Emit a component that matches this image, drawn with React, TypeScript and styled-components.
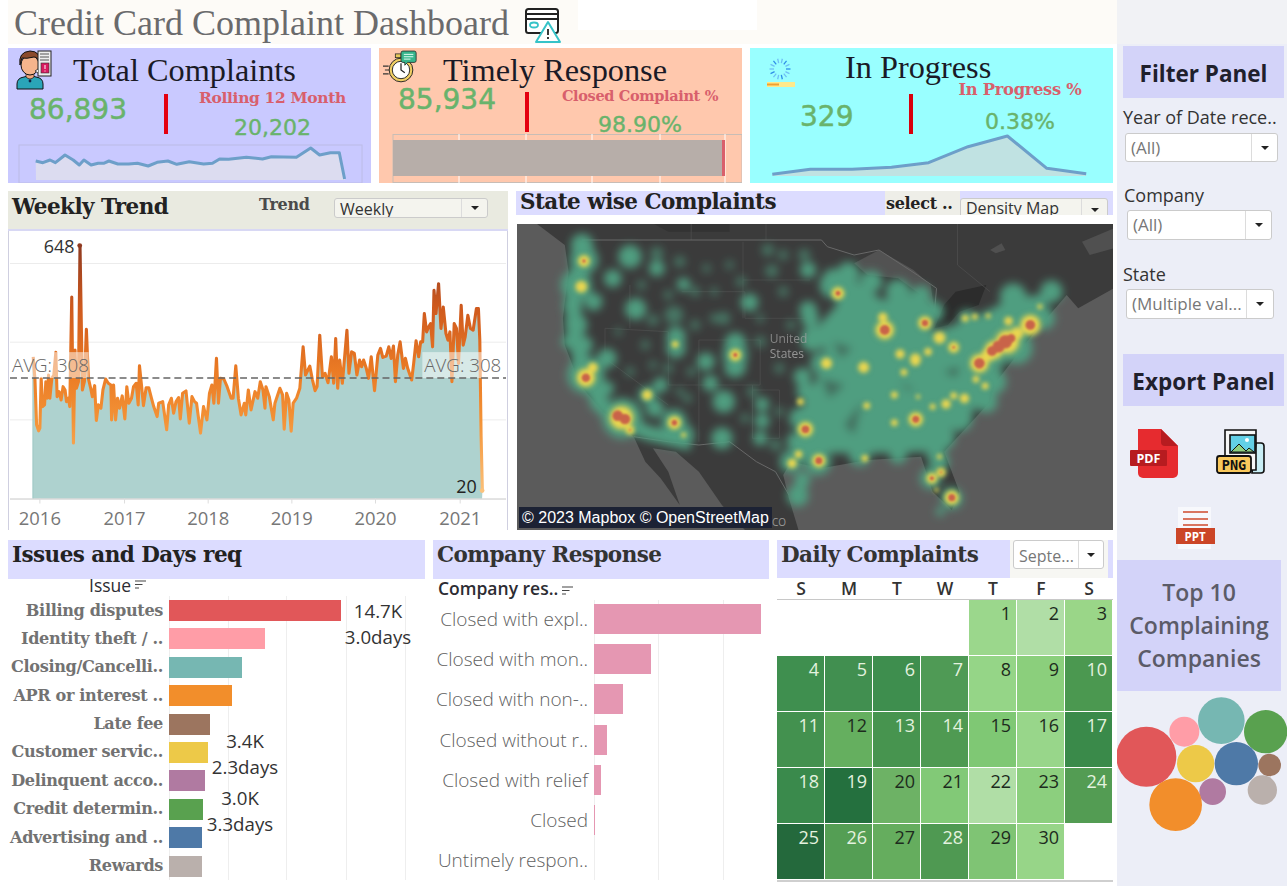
import React from "react";
import styled, { createGlobalStyle } from "styled-components";

const Global = createGlobalStyle`
  html, body { margin: 0; padding: 0; background: #fff; overflow: hidden; }
  * { box-sizing: border-box; }
`;
const SANS = `"Open Sans", "Noto Sans", sans-serif`;
const TIMES = `"Liberation Serif", serif`;
const SERIF = `"DejaVu Serif", "Liberation Serif", serif`;
const KPI = `"DejaVu Sans", sans-serif`;

const Page = styled.div`display:flex;width:1287px;height:886px;overflow:hidden;background:#fff;`;
const Main = styled.main`width:1117px;padding:0 4px 0 8px;display:flex;flex-direction:column;`;
const TopBar = styled.header`height:44px;background:#fdfbf7;display:flex;align-items:flex-start;padding-left:6px;margin-right:-4px;margin-bottom:4px;`;
const PageTitle = styled.h1`margin:4px 0 0;font:400 36px/38px ${TIMES};color:#6a6a6c;white-space:nowrap;width:511px;`;
const TitleIcon = styled.svg`width:38px;height:38px;margin-top:6px;flex:none;`;
const BlankTab = styled.div`width:179px;height:30px;background:#fff;margin-left:15px;`;

const KpiRow = styled.section`display:grid;grid-template-columns:repeat(3,363px);gap:8px;height:135px;`;
const Card = styled.article<{ $bg: string }>`background:${p => p.$bg};height:135px;display:flex;flex-direction:column;overflow:hidden;`;
const CardHead = styled.div<{ $h: number; $pad: number }>`height:${p => p.$h}px;padding-left:${p => p.$pad}px;display:flex;align-items:flex-start;flex:none;`;
const CardIcon = styled.svg<{ $w: number }>`width:${p => p.$w}px;height:42px;flex:none;margin-top:1px;`;
const CardTitle = styled.h2<{ $t: number; $l: number }>`margin:${p => p.$t}px 0 0 ${p => p.$l}px;font:400 32.3px/36px ${TIMES};color:#1a1a26;white-space:nowrap;`;
const CardBody = styled.div<{ $h: number; $col: number }>`height:${p => p.$h}px;flex:none;display:grid;grid-template-columns:${p => p.$col}px 4px 1fr;position:relative;z-index:1;`;
const BigValue = styled.div<{ $x: number; $t: number }>`margin:${p => p.$t}px 0 0 ${p => p.$x}px;font:400 28px/28px ${KPI};color:#69b36c;-webkit-text-stroke:0.5px #69b36c;`;
const Divider = styled.div<{ $t: number; $c?: string }>`margin-top:${p => p.$t}px;width:4px;height:40px;background:${p => p.$c || "#e4000f"};`;
const KpiRight = styled.div<{ $pad: number }>`padding-left:${p => p.$pad}px;text-align:center;`;
const KpiLabel = styled.div<{ $t: number; $fs: number }>`margin-top:${p => p.$t}px;font:700 ${p => p.$fs}px/18px ${SERIF};color:#d85f6c;white-space:nowrap;letter-spacing:-0.35px;`;
const KpiSub = styled.div<{ $t: number }>`margin-top:${p => p.$t}px;font:400 22px/24px ${KPI};color:#69b36c;-webkit-text-stroke:0.4px #69b36c;`;
const Spark = styled.svg`width:363px;height:49px;display:block;flex:none;`;

const MidRow = styled.section`display:grid;grid-template-columns:500px 597px;gap:8px;height:339px;margin-top:8px;`;
const TrendCol = styled.div`display:flex;flex-direction:column;`;
const TrendHead = styled.div`height:40px;background:#e9eae0;border-bottom:2px solid #d8d8f4;display:flex;align-items:flex-start;padding:2px 0 0 4px;`;
const PanelTitle = styled.h3<{ $w?: number; $c?: string; $lh?: number }>`margin:0;font:700 21.5px/${p => p.$lh || 28}px ${SERIF};letter-spacing:-0.55px;color:${p => p.$c || "#222"};white-space:nowrap;${p => p.$w ? `width:${p.$w}px;flex:none;` : ""}`;
const MiniLabel = styled.span<{ $w: number; $c?: string }>`display:block;flex:none;width:${p => p.$w}px;font:700 16px/24px ${SERIF};letter-spacing:-0.3px;color:${p => p.$c || "#4a4a4a"};white-space:nowrap;`;
const TrendSvg = styled.svg`width:500px;height:299px;display:block;border-left:1px solid #cfcfe0;border-right:1px solid #cfcfe0;`;
const Drop = styled.div<{ $w: number; $h: number; $bg?: string; $mt?: number }>`width:${p => p.$w}px;height:${p => p.$h}px;margin-top:${p => p.$mt || 0}px;background:${p => p.$bg || "#fff"};border:1px solid #cbcbcb;border-radius:3px;display:flex;align-items:stretch;overflow:hidden;flex:none;`;
const DropText = styled.span<{ $fs?: number; $c?: string; $off?: number }>`flex:1;margin-top:${p => p.$off ?? 2}px;padding-left:5px;font:400 ${p => p.$fs || 17}px/24px ${SANS};color:${p => p.$c || "#777"};white-space:nowrap;overflow:hidden;`;
const DropArrow = styled.span<{ $w: number }>`width:${p => p.$w}px;flex:none;border-left:1px solid #dcdcdc;display:flex;align-items:center;justify-content:center;&::after{content:"";border-left:4px solid transparent;border-right:4px solid transparent;border-top:4px solid #222;}`;
const MapCol = styled.div`display:flex;flex-direction:column;`;
const MapHead = styled.div`height:24px;background:#dcdcff;display:flex;padding-left:4px;overflow:hidden;margin-bottom:9px;`;
const SelectTag = styled.div`width:75px;height:24px;background:#eeeee8;padding:1px 0 0 1px;flex:none;`;
const MapFrame = styled.div`position:relative;width:596px;height:306px;margin-left:1px;overflow:hidden;background:#5b5b5b;`;
const MapSvg = styled.svg`display:block;width:596px;height:306px;`;
const Attribution = styled.div`position:absolute;left:2px;bottom:2px;height:21px;width:253px;background:#1c2234;color:#fff;font:400 16px/21px "Liberation Sans",sans-serif;padding-left:3px;white-space:nowrap;`;
const CoMark = styled.span`position:absolute;left:255px;bottom:1px;font:400 10px/14px ${SANS};color:#999;`;

const BottomRow = styled.section`display:grid;grid-template-columns:417px 336px 336px;gap:8px;height:346px;margin-top:10px;`;
const Col = styled.div`display:flex;flex-direction:column;min-width:0;`;
const ColHead = styled.div`height:39px;background:#dcdcff;padding:1px 0 0 4px;flex:none;`;
const SubHead = styled.div<{ $h: number; $pad: number }>`height:${p => p.$h}px;overflow:hidden;padding-left:${p => p.$pad}px;display:flex;align-items:flex-start;gap:4px;flex:none;`;
const SubText = styled.span<{ $off: number; $fw: number }>`margin-top:${p => p.$off}px;font:${p => p.$fw} 17.5px/22px ${SANS};color:#2c2c32;white-space:nowrap;`;
const SortIcon = styled.svg<{ $off: number }>`width:11px;height:9px;flex:none;margin-top:${p => p.$off}px;`;
const BarArea = styled.div`position:relative;flex:none;`;
const GridLine = styled.i<{ $x: number; $t: number; $h: number }>`position:absolute;left:${p => p.$x}px;top:${p => p.$t}px;height:${p => p.$h}px;width:1px;background:#eeeeee;`;
const IssueRows = styled.div`position:relative;display:grid;grid-auto-rows:21px;row-gap:7.4px;grid-template-columns:155px 1fr;column-gap:6px;align-items:center;`;
const IssueLabel = styled.div`font:700 16.1px/21px ${SERIF};letter-spacing:-0.35px;color:#727272;text-align:right;white-space:nowrap;justify-self:end;margin-top:-1px;`;
const Bar = styled.div<{ $w: number; $c: string; $h: number }>`width:${p => p.$w}px;height:${p => p.$h}px;background:${p => p.$c};`;
const Callout = styled.div<{ $x: number; $y: number }>`position:absolute;left:${p => p.$x}px;top:${p => p.$y}px;transform:translateX(-50%);text-align:center;font:400 18.7px/26px ${SANS};color:#333;white-space:nowrap;`;
const RespRows = styled.div`position:relative;display:grid;grid-auto-rows:30px;row-gap:10.2px;grid-template-columns:155px 1fr;column-gap:6px;align-items:center;`;
const RespLabel = styled.div`font:300 19px/26px ${SANS};color:#5f5f5f;text-align:right;white-space:nowrap;justify-self:end;`;
const CalHead = styled.div`height:38px;display:flex;flex:none;background:#dcdcff;padding-left:4px;`;
const CalTitle = styled.div`width:229px;padding-top:1px;flex:none;`;
const CalSelectBox = styled.div`width:98px;height:38px;background:#f7f7f3;padding-left:3px;flex:none;`;
const WeekRow = styled.div`display:grid;grid-template-columns:repeat(7,48px);height:22px;border-bottom:1px solid #c8c8c8;flex:none;`;
const WeekDay = styled.span`text-align:center;font:600 17.5px/21px ${SANS};color:#333;`;
const CalGrid = styled.div`display:grid;grid-template-columns:repeat(7,47px);grid-auto-rows:55px;gap:1px;border-bottom:2px solid #cfcfcf;height:282px;flex:none;`;
const Day = styled.div<{ $bg: string; $light: boolean }>`background:${p => p.$bg};color:${p => p.$light ? "#e3f2df" : "#1d2b1d"};font:400 18px/24px ${SANS};text-align:right;padding:1px 5px 0 0;`;

const Side = styled.aside`width:170px;background:#eceef7;display:flex;flex-direction:column;position:relative;`;
const SideTop = styled.div`height:44px;background:#f1f2f5;margin-bottom:2px;flex:none;`;
const PanelBox = styled.div<{ $mt?: number }>`width:161px;height:52px;margin:${p => p.$mt || 0}px 0 0 6px;padding-top:3px;background:#d3d3f9;display:flex;align-items:center;justify-content:center;font:700 22.5px/28px ${SANS};color:#20202c;flex:none;white-space:nowrap;`;
const FilterGroup = styled.div<{ $x: number; $t: number }>`padding-left:${p => p.$x}px;margin-top:${p => p.$t}px;flex:none;`;
const FilterLabel = styled.div<{ $dx: number; $gap: number }>`font:400 18px/24px ${SANS};color:#333;margin:0 0 ${p => p.$gap}px ${p => p.$dx}px;white-space:nowrap;`;
const ExportRow = styled.div`display:flex;margin:23px 0 0 13px;flex:none;height:50px;`;
const PptWrap = styled.div`margin:28px 0 0 58px;height:42px;flex:none;`;
const TopBox = styled.div`width:164px;height:131px;margin-top:11px;background:#d3d3f9;display:flex;flex-direction:column;align-items:center;justify-content:center;font:600 23px/33px ${SANS};color:#5b5b68;text-align:center;flex:none;`;
const BubbleSvg = styled.svg`width:170px;height:150px;display:block;flex:none;`;

type P = [number, number];
const toPath = (pts: P[]) => pts.map((p, i) => `${i ? "L" : "M"}${p[0].toFixed(1)} ${p[1].toFixed(1)}`).join(" ");

const A: P[] = [[22,365],[27,430],[32,570],[38,588],[42,580],[46,430],[50,515],[56,510],[60,440],[64,490],[68,420],[72,490],[78,430],[84,420],[90,352],[94,485],[100,470],[106,495],[112,455],[118,465],[122,500],[128,490],[132,515],[138,185],[143,625],[148,345],[152,460],[158,440],[163,30],[170,465],[176,440],[182,282],[188,430],[195,460],[200,485],[207,452],[212,557],[218,510],[226,520],[232,465],[240,432],[248,445],[256,450],[258,555],[264,450],[270,555],[276,490],[282,520],[290,483],[298,552],[304,455],[310,505],[318,490],[324,455],[332,445],[338,510],[342,392],[348,450],[354,512],[362,458],[370,458],[378,490],[385,515],[395,545],[400,505],[412,500],[424,585],[430,510],[438,490],[445,535],[452,500],[460,488],[465,552],[472,475],[482,468],[492,565],[500,485],[508,500],[514,505],[526,595],[535,515],[545,555],[553,475],[560,450],[566,505],[574,370],[580,505],[586,430],[596,432],[606,455],[618,490],[624,490],[632,392],[640,490],[648,540],[658,505],[662,540],[670,465],[678,525],[690,470],[698,490],[706,440],[714,465],[720,520]];
const B: P[] = [[18,350],[28,380],[40,450],[45,400],[60,355],[68,375],[73,478],[80,370],[87,390],[94,484],[100,400],[110,385],[120,355],[130,230],[137,315],[150,288],[158,330],[166,362],[172,350],[180,195],[188,320],[196,310],[205,338],[215,260],[222,340],[228,205],[234,355],[240,270],[248,340],[262,180],[268,310],[276,245],[284,250],[292,315],[300,270],[306,290],[312,270],[320,295],[327,325],[335,260],[345,362],[355,255],[363,235],[370,262],[380,258],[388,230],[395,265],[402,228],[408,335],[415,255],[422,215],[432,295],[438,265],[445,295],[457,330],[463,280],[470,212],[478,260],[484,215],[490,215],[495,130],[502,185],[508,170],[514,160],[520,230],[524,60],[530,130],[538,40],[545,175],[552,110],[560,190],[566,210],[572,185],[578,335],[585,160],[592,175],[598,280],[606,105],[612,225],[618,200],[626,135],[634,175],[642,180],[652,115],[658,115],[662,210],[666,500],[670,665]];
const trend: P[] = [...A.map(([x, y]): P => [25 + x / 3, 235 + y / 3]), ...B.map(([x, y]): P => [260 + x / 3, 270 + y / 3])];

const TrendChart = () => {
  const line = toPath(trend);
  const area = `${line} L483 499 L32 499 Z`;
  const years: [string, number][] = [["2016", 39], ["2017", 124], ["2018", 208], ["2019", 292], ["2020", 376], ["2021", 461]];
  return (
    <TrendSvg viewBox="8 231 500 299">
      <defs>
        <linearGradient id="tg" gradientUnits="userSpaceOnUse" x1="0" y1="245" x2="0" y2="495">
          <stop offset="0" stopColor="#8f3a20" />
          <stop offset="0.25" stopColor="#cf5a1e" />
          <stop offset="0.5" stopColor="#ea7a24" />
          <stop offset="0.7" stopColor="#f39236" />
          <stop offset="1" stopColor="#fbc27c" />
        </linearGradient>
      </defs>
      {[263, 342, 420].map(y => <line key={y} x1="9" x2="507" y1={y} y2={y} stroke="#ececec" />)}
      <path d={area} fill="#aed2cf" />
      <line x1="32" x2="32" y1="360" y2="499" stroke="#9cc7c4" />
      <path d={line} fill="none" stroke="url(#tg)" strokeWidth="3.1" strokeLinejoin="round" />
      <line x1="9" x2="507" y1="499.5" y2="499.5" stroke="#c8c8c8" />
      <rect x="12" y="352" width="76" height="26" fill="#fff" fillOpacity=".5" />
      <rect x="423" y="352" width="81" height="26" fill="#fff" fillOpacity=".5" />
      <text x="11" y="372" fontFamily={SANS} fontSize="18.8" fontWeight="300" fill="#666">AVG: 308</text>
      <text x="425" y="372" fontFamily={SANS} fontSize="18.8" fontWeight="300" fill="#666">AVG: 308</text>
      <line x1="9" x2="507" y1="378" y2="378" stroke="#666" strokeWidth="1.6" strokeDasharray="7 4" />
      <circle cx="79" cy="245" r="2.4" fill="#8f3a20" />
      <circle cx="483" cy="491" r="2.4" fill="#fbc27c" />
      <text x="43" y="252" fontFamily={SANS} fontSize="18" fill="#333">648</text>
      <text x="457" y="493" fontFamily={SANS} fontSize="18" fill="#222">20</text>
      {years.map(([t, x]) => (
        <g key={t}>
          <line x1={x} x2={x} y1="499" y2="504" stroke="#ddd" />
          <text x={x} y="526" textAnchor="middle" fontFamily={SANS} fontSize="18.5" fill="#777">{t}</text>
        </g>
      ))}
    </TrendSvg>
  );
};

const mx = (x: number) => 515 + x / 2.61;
const my = (y: number) => 185 + y / 3;
const mapPts = (pts: number[][]) => pts.map(([x, y]) => `${mx(x).toFixed(1)},${my(y).toFixed(1)}`).join(" ");

const GREEN: number[][] = [[175,180,25],[180,225,32],[160,300,35],[150,360,22],[205,350,20],[160,420,25],[140,470,16],[180,480,20],[240,520,22],[185,570,42],[220,650,22],[240,610,16],[280,700,45],[345,630,20],[365,670,20],[380,600,17],[415,710,28],[440,750,24],[300,215,26],[255,280,20],[370,250,18],[315,372,24],[440,298,15],[420,455,22],[420,490,22],[498,530,20],[575,475,24],[575,510,28],[575,545,24],[510,595,18],[545,650,25],[540,760,24],[645,658,16],[645,708,17],[640,760,16],[738,932,24],[750,885,18],[750,575,20],[612,352,20],[765,255,18],[868,258,20],[925,285,20],[765,375,20],[780,460,28],[830,280,22],
[830,300,30],[870,265,25],[930,290,25],[1000,320,28],[1060,330,22],[1090,380,25],[1180,400,20],[1300,335,30],[1400,320,25],[1380,400,25],[1310,490,35],[1250,590,28],[1230,650,25],[1160,700,30],[1120,760,25],[1100,810,22],[1000,810,20],[900,810,25],[790,830,30],[720,830,25],[735,770,22],[745,700,25],[760,620,22],[800,535,25],[775,465,25],[770,400,20],[1108,830,22],[1085,880,24],[1140,940,24],[1110,980,10]];
const DIM: number[][] = [[370,205,14],[430,230,12],[415,390,20],[360,405,12],[545,400,14],[470,320,11],[590,290,11],[700,210,11],[470,420,11],[640,470,12],[400,550,11],[660,195,13],[670,258,14],[755,210,13],[680,780,13],[520,400,10],[400,330,10],[340,480,10],[620,620,12],[600,700,10],[690,550,11],[460,560,10],[300,560,10],[560,240,9],[700,320,11],[720,420,10],[450,640,10],[330,300,10],[500,250,9],[520,320,9],[640,400,9],[430,620,9],[560,560,10],[690,680,10],[270,440,8],[360,540,9]];
const YEL: number[][] = [[180,228,14],[173,305,14],[185,578,22],[203,548,12],[278,698,28],[300,735,11],[345,630,12],[416,713,16],[418,478,8],[575,510,14],[843,325,15],[813,535,13],[910,547,13],[965,435,22],[960,397,11],[1070,414,16],[1108,458,14],[1145,487,13],[1005,507,11],[1045,522,13],[1045,530,10],[1078,500,9],[1015,562,8],[1212,535,22],[1235,510,16],[1250,495,22],[1285,470,28],[1310,445,15],[1345,420,24],[1288,408,10],[1175,400,8],[1200,395,7],[1235,393,6],[1203,583,8],[1227,603,8],[990,630,8],[1125,657,11],[1173,640,11],[1145,632,8],[1090,665,7],[1052,635,5],[1046,703,17],[990,713,8],[918,662,8],[745,650,8],[758,733,18],[793,827,16],[740,808,9],[723,835,11],[913,820,8],[1088,880,13],[1112,862,11],[1100,915,5],[1140,938,17],[1108,815,6],[440,750,6],[1370,365,6]];
const RED: number[][] = [[180,228,5],[185,578,12],[268,692,15],[287,702,15],[300,735,3],[416,713,8],[575,510,6],[843,325,7],[965,435,14],[1070,414,9],[1145,487,4],[1212,535,15],[1245,498,14],[1262,485,17],[1280,470,19],[1295,460,12],[1345,420,14],[1046,703,10],[758,733,11],[793,827,10],[1088,880,6],[1112,862,3],[1140,938,10]];

const USMap = () => {
  const r = (v: number) => v / 2.8;
  return (
    <MapSvg viewBox="517 224 596 306">
      <defs>
        <filter id="b1" x="-20%" y="-20%" width="140%" height="140%"><feGaussianBlur stdDeviation="4.2" /></filter>
        <filter id="b2" x="-20%" y="-20%" width="140%" height="140%"><feGaussianBlur stdDeviation="1.9" /></filter>
        <filter id="b3" x="-20%" y="-20%" width="140%" height="140%"><feGaussianBlur stdDeviation="1" /></filter>
      </defs>
      <rect x="517" y="224" width="596" height="306" fill="#5b5b5b" />
      <polygon fill="#3b3b3b" points={mapPts([[55,115],[130,180],[140,260],[125,400],[130,480],[170,600],[230,680],[310,755],[340,830],[380,880],[430,960],[400,860],[360,790],[420,800],[480,860],[540,960],[600,1035],[740,1035],[715,940],[700,870],[720,830],[800,850],[920,825],[1060,815],[1090,920],[1140,975],[1160,920],[1120,800],[1240,650],[1250,600],[1350,450],[1440,330],[1470,370],[1563,310],[1563,115]])} />
      <polygon fill="#525252" points={mapPts([[885,235],[950,195],[1040,255],[1085,300],[1095,380],[1060,330],[1000,280],[920,270]])} />
      <polygon fill="#2c2c2c" points={mapPts([[1095,430],[1120,360],[1150,320],[1230,300],[1210,360],[1160,380],[1130,420]])} />
      <polygon fill="#505050" points={mapPts([[1480,170],[1563,130],[1563,190],[1500,210]])} />
      <polygon fill="#505050" points={mapPts([[1240,195],[1270,175],[1280,195],[1255,205]])} />
      <polygon fill="#333" points={mapPts([[360,115],[560,115],[560,140],[400,140]])} />
      <g fill="none" stroke="#4c4c4c" strokeWidth=".8">
        <polyline points={mapPts([[235,430],[400,440],[400,600]])} />
        <polyline points={mapPts([[235,430],[235,520],[400,660]])} />
        <polyline points={mapPts([[300,300],[300,430]])} />
        <polyline points={mapPts([[435,320],[600,320],[600,400],[760,400]])} />
        <polyline points={mapPts([[595,170],[595,400]])} />
        <polyline points={mapPts([[595,285],[770,285]])} />
        <polyline points={mapPts([[480,465],[640,465],[640,600],[400,600]])} />
        <polyline points={mapPts([[480,465],[480,770]])} />
        <polyline points={mapPts([[620,600],[620,760],[690,760],[690,615],[620,615]])} />
        <polyline points={mapPts([[1155,115],[1155,240],[1240,320]])} />
        <polyline points={mapPts([[460,115],[460,165]])} />
        <polyline points={mapPts([[655,115],[655,165]])} />
      </g>
      <g fill="none" stroke="#686868" strokeWidth="1">
        <polyline points={mapPts([[175,165],[800,165],[815,185],[885,210],[950,195],[1050,270],[1100,310],[1095,380]])} />
        <polyline points={mapPts([[310,755],[400,770],[480,780],[560,770],[630,830],[680,860],[715,930]])} />
      </g>
      <g filter="url(#b1)">
        <polygon fill="#4f9e80" points={mapPts([[830,300],[880,280],[960,345],[1030,330],[1080,360],[1090,440],[1170,410],[1300,340],[1400,325],[1380,390],[1340,460],[1250,570],[1225,650],[1110,760],[1095,800],[950,805],[790,805],[720,835],[735,780],[750,660],[780,600],[810,500],[785,430],[840,360]])} />
        <polyline fill="none" stroke="#4f9e80" strokeWidth="15" strokeLinejoin="round" points={mapPts([[175,180],[160,300],[150,420],[170,520],[185,580],[230,670],[290,715],[350,745],[460,775]])} />
        {GREEN.map(([x, y, s], i) => <circle key={i} cx={mx(x)} cy={my(y)} r={r(s) * 1.25} fill="#4f9e80" />)}
        {DIM.map(([x, y, s], i) => <circle key={i} cx={mx(x)} cy={my(y)} r={r(s) * 1.3} fill="#4f9e80" opacity=".6" />)}
        <polygon fill="#3a4a44" opacity=".8" points={mapPts([[1120,560],[1160,545],[1150,575]])} />
        <polygon fill="#3a4a44" opacity=".6" points={mapPts([[860,720],[905,650],[885,750]])} />
        <polygon fill="#3a4a44" opacity=".6" points={mapPts([[800,580],[860,600],[820,640]])} />
        <polygon fill="#3a4a44" opacity=".6" points={mapPts([[830,470],[880,490],[850,520]])} />
        <polygon fill="#3a4a44" opacity=".5" points={mapPts([[1000,590],[1040,610],[1030,620]])} />
      </g>
      <g filter="url(#b2)">
        {YEL.map(([x, y, s], i) => <circle key={i} cx={mx(x)} cy={my(y)} r={r(s) * 1.5} fill="#9fbf62" opacity=".4" />)}
        {YEL.map(([x, y, s], i) => <circle key={i} cx={mx(x)} cy={my(y)} r={r(s) * 1.1} fill="#e9d650" />)}
      </g>
      <g filter="url(#b3)">
        {RED.map(([x, y, s], i) => <circle key={i} cx={mx(x)} cy={my(y)} r={r(s)} fill="#c9644a" />)}
      </g>
      <text x={mx(665)} y={my(475)} fontFamily={SANS} fontSize="12" fill="#a5a5a5" opacity=".7">United</text>
      <text x={mx(665)} y={my(520)} fontFamily={SANS} fontSize="12" fill="#a5a5a5" opacity=".85">States</text>
    </MapSvg>
  );
};

const spark1: P[] = ([[100,483],[120,488],[140,480],[155,488],[182,465],[205,480],[222,495],[235,480],[255,495],[275,490],[290,490],[305,483],[330,492],[360,492],[385,490],[415,498],[440,487],[470,483],[495,493],[530,485],[570,492],[595,490],[615,477],[640,478],[690,472],[735,477],[760,470],[830,472],[870,444],[895,465],[925,458],[950,458],[965,537]] as P[]).map(([x, y]): P => [x / 2.8 - 8, y / 3 - 134]);
const spark3: P[] = ([[458,523],[540,508],[630,508],[715,502],[795,488],[880,440],[965,408],[1050,505],[1135,521]] as P[]).map(([x, y]): P => [560 + x / 2.157 - 750, y / 3 - 134]);

const PersonIcon = () => (
  <CardIcon $w={44} viewBox="0 0 44 42">
    <path d="M4 40 v-5 q0-6 7-7 l4-1 h4 l4 1 q7 1 7 7 v5z" fill="#2aa5b8" stroke="#111" strokeWidth="1" />
    <circle cx="17" cy="32" r="1.4" fill="#124" />
    <path d="M13 24 h8 v4 q-4 4-8 0z" fill="#f0a77e" stroke="#111" strokeWidth=".7" />
    <ellipse cx="17" cy="16" rx="9" ry="10" fill="#f5b48c" stroke="#111" strokeWidth="1" />
    <path d="M7 16 q-2-13 10-14 q11 0 10 13 q-2-7-6-7 q-8 2-12 1 q-1 3-2 7z" fill="#8a4a2c" stroke="#111" strokeWidth="1" />
    <rect x="25" y="2" width="13" height="25" fill="#eee" stroke="#222" strokeWidth="1" />
    <path d="M27 5 h9 M27 8 h9 M27 11 h9" stroke="#555" strokeWidth="1" />
    <rect x="28" y="14" width="8" height="10" fill="#d81b60" stroke="#333" strokeWidth=".6" />
    <path d="M32 16 v4 M32 21.5 v1" stroke="#fff" strokeWidth="1" />
    <path d="M25 20 l-3 2 l3 2" fill="#eee" stroke="#222" strokeWidth=".8" />
  </CardIcon>
);
const WatchIcon = () => (
  <CardIcon $w={36} viewBox="0 0 38 42">
    <path d="M0 17h6 M2 21h6 M0 25h6" stroke="#333" strokeWidth="1.3" />
    <rect x="13" y="4" width="6" height="4" fill="#e8c95a" stroke="#222" strokeWidth=".8" />
    <circle cx="19" cy="21" r="12.5" fill="#f1cf63" stroke="#222" strokeWidth="1" />
    <circle cx="19" cy="21" r="9.2" fill="#fff" stroke="#222" strokeWidth="1" />
    <path d="M19 14v7l4 3" fill="none" stroke="#222" strokeWidth="1.3" />
    <path d="M21 1h12a2 2 0 012 2v8a2 2 0 01-2 2h-7l-3 3v-3h-2a2 2 0 01-2-2V3a2 2 0 012-2z" fill="#37b58c" stroke="#222" strokeWidth=".8" />
    <path d="M22 4.500h10M22 7h10M22 9.500h7" stroke="#e7fff5" strokeWidth="1" />
  </CardIcon>
);
const SpinnerIcon = () => (
  <CardIcon $w={36} viewBox="0 0 36 42">
    {Array.from({ length: 14 }).map((_, i) => {
      const a = (i / 14) * Math.PI * 2;
      return <line key={i} x1={18 + Math.cos(a) * 6} y1={20 + Math.sin(a) * 6} x2={18 + Math.cos(a) * 10.5} y2={20 + Math.sin(a) * 10.5} stroke={i % 3 ? "#6fc0f5" : "#2f8fe8"} strokeWidth="1.3" />;
    })}
    <rect x="5" y="33" width="28" height="5" fill="#ffe98a" />
    <rect x="5" y="34.5" width="12" height="2" fill="#f0a030" />
  </CardIcon>
);
const Sort = ({ off }: { off: number }) => (
  <SortIcon $off={off} viewBox="0 0 11 9"><path d="M0 1h11M0 4.500h7.500M0 8h4" stroke="#444" strokeWidth="1.2" /></SortIcon>
);

const issues: [string, number, string][] = [["Billing disputes",172,"#e15759"],["Identity theft / ..",96,"#ff9da7"],["Closing/Cancelli..",73,"#76b7b2"],["APR or interest ..",63,"#f28e2b"],["Late fee",41,"#9c755f"],["Customer servic..",39,"#edc948"],["Delinquent acco..",36,"#b07aa1"],["Credit determin..",34,"#59a14f"],["Advertising and ..",33,"#4e79a7"],["Rewards",33,"#bab0ac"]];
const responses: [string, number][] = [["Closed with expl..",167],["Closed with mon..",57],["Closed with non-..",29],["Closed without r..",13],["Closed with relief",7],["Closed",1],["Untimely respon..",0]];
const weeks = ["S","M","T","W","T","F","S"];
const days: [number, string, boolean][] = [[1,"#9bd78c",false],[2,"#b0dea6",false],[3,"#9ad688",false],[4,"#3f8f4f",true],[5,"#418f50",true],[6,"#3e8e4e",true],[7,"#4f9a55",true],[8,"#95d587",false],[9,"#8bcf7c",false],[10,"#4b9850",true],[11,"#43914f",true],[12,"#65af5f",false],[13,"#47944f",true],[14,"#4f9a52",true],[15,"#7fc874",false],[16,"#98d68a",false],[17,"#3a8a4a",true],[18,"#3a8a4c",true],[19,"#24703e",true],[20,"#6db265",false],[21,"#82c977",false],[22,"#b0dea6",false],[23,"#8ccf7e",false],[24,"#539c53",true],[25,"#24693c",true],[26,"#549e54",true],[27,"#65ad5e",false],[28,"#4f9952",true],[29,"#7fc474",false],[30,"#97d588",false]];
const bubbles: [number, number, number, string][] = [[1127,665,90,"#e15759"],[1241,590,45,"#ff9da7"],[1352,557,70,"#76b7b2"],[1485,590,65,"#59a14f"],[1275,686,56,"#edc948"],[1397,686,65,"#4e79a7"],[1497,690,34,"#9c755f"],[1326,770,40,"#b07aa1"],[1475,765,44,"#bab0ac"],[1215,809,79,"#f28e2b"]];

export default function App() {
  return (
    <>
      <Global />
      <Page>
        <Main>
          <TopBar>
            <PageTitle>Credit Card Complaint Dashboard</PageTitle>
            <TitleIcon viewBox="0 0 38 38">
              <rect x="1" y="3" width="32" height="24" rx="2.5" fill="#fff" stroke="#222" strokeWidth="2" />
              <rect x="1" y="8" width="32" height="5" fill="#fff" stroke="#222" strokeWidth="2" />
              <ellipse cx="9" cy="19" rx="4" ry="2.5" fill="#fff" stroke="#36c3c8" strokeWidth="1.8" />
              <path d="M23 16 L35 36 H11z" fill="#fff" stroke="#36c3c8" strokeWidth="2" strokeLinejoin="round" />
              <path d="M23 23v6M23 31v2" stroke="#222" strokeWidth="1.8" />
            </TitleIcon>
            <BlankTab />
          </TopBar>

          <KpiRow>
            <Card $bg="#c9c9ff">
              <CardHead $h={42} $pad={5}>
                <PersonIcon />
                <CardTitle $t={4} $l={16}>Total Complaints</CardTitle>
              </CardHead>
              <CardBody $h={44} $col={156}>
                <BigValue $x={21} $t={6}>86,893</BigValue>
                <Divider $t={4} />
                <KpiRight $pad={6}>
                  <KpiLabel $t={-1} $fs={15.5}>Rolling 12 Month</KpiLabel>
                  <KpiSub $t={9}>20,202</KpiSub>
                </KpiRight>
              </CardBody>
              <Spark viewBox="0 0 363 49">
                <rect x="11" y="11" width="343" height="38" fill="none" stroke="#bcbce6" />
                <path d={`${toPath(spark1)} L337 46 L28 46Z`} fill="#dcdcf0" />
                <path d={toPath(spark1)} fill="none" stroke="#6d9fc9" strokeWidth="3" strokeLinejoin="round" />
              </Spark>
            </Card>

            <Card $bg="#ffc8ad">
              <CardHead $h={42} $pad={4}>
                <WatchIcon />
                <CardTitle $t={4} $l={24}>Timely Response</CardTitle>
              </CardHead>
              <CardBody $h={44} $col={146}>
                <BigValue $x={19} $t={-4}>85,934</BigValue>
                <Divider $t={2} />
                <KpiRight $pad={9}>
                  <KpiLabel $t={-3} $fs={14.5}>Closed Complaint %</KpiLabel>
                  <KpiSub $t={8}>98.90%</KpiSub>
                </KpiRight>
              </CardBody>
              <Spark viewBox="0 0 363 49">
                <rect x="14" y="0.5" width="349" height="48" fill="none" stroke="#c8bdb6" />
                {[80, 147, 213, 281, 346].map(x => <line key={x} x1={x} x2={x} y1="0" y2="49" stroke="#fff" />)}
                <rect x="14" y="6" width="331" height="36" fill="#b7aea9" />
                <rect x="343" y="6" width="3" height="36" fill="#d9606b" />
              </Spark>
            </Card>

            <Card $bg="#99ffff">
              <CardHead $h={34} $pad={12}>
                <SpinnerIcon />
                <CardTitle $t={1} $l={47}>In Progress</CardTitle>
              </CardHead>
              <CardBody $h={52} $col={159}>
                <BigValue $x={50} $t={21}>329</BigValue>
                <Divider $t={12} $c="#d9000c" />
                <KpiRight $pad={14}>
                  <KpiLabel $t={-1} $fs={16.4}>In Progress %</KpiLabel>
                  <KpiSub $t={11}>0.38%</KpiSub>
                </KpiRight>
              </CardBody>
              <Spark viewBox="0 0 363 49">
                <path d={`${toPath(spark3)} L${spark3[8][0]} 42 L${spark3[0][0]} 42Z`} fill="#c0e2e2" />
                <path d={toPath(spark3)} fill="none" stroke="#6d9fc9" strokeWidth="3" strokeLinejoin="round" />
              </Spark>
            </Card>
          </KpiRow>

          <MidRow>
            <TrendCol>
              <TrendHead>
                <PanelTitle $w={247}>Weekly Trend</PanelTitle>
                <MiniLabel $w={75}>Trend</MiniLabel>
                <Drop $w={154} $h={20} $bg="#f4f4ee" $mt={5}>
                  <DropText $fs={16} $c="#333" $off={-2}>Weekly</DropText>
                  <DropArrow $w={26} />
                </Drop>
              </TrendHead>
              <TrendChart />
            </TrendCol>
            <MapCol>
              <MapHead>
                <PanelTitle $w={365} $lh={21}>State wise Complaints</PanelTitle>
                <SelectTag><MiniLabel $w={72} $c="#222">select ..</MiniLabel></SelectTag>
                <Drop $w={148} $h={24} $bg="#f4f4ee" $mt={7}>
                  <DropText $fs={16} $c="#333" $off={-3}>Density Map</DropText>
                  <DropArrow $w={26} />
                </Drop>
              </MapHead>
              <MapFrame>
                <USMap />
                <Attribution>© 2023 Mapbox © OpenStreetMap</Attribution>
                <CoMark>CO</CoMark>
              </MapFrame>
            </MapCol>
          </MidRow>

          <BottomRow>
            <Col>
              <ColHead><PanelTitle>Issues and Days req</PanelTitle></ColHead>
              <SubHead $h={21} $pad={81}><SubText $off={-5} $fw={500}>Issue</SubText><Sort off={1} /></SubHead>
              <BarArea>
                {[161, 220, 278, 338, 397].map(x => <GridLine key={x} $x={x} $t={-4} $h={284} />)}
                <IssueRows>
                  {issues.map(([l, w, c]) => (
                    <React.Fragment key={l}>
                      <IssueLabel>{l}</IssueLabel>
                      <Bar $w={w} $c={c} $h={21} />
                    </React.Fragment>
                  ))}
                </IssueRows>
                <Callout $x={370} $y={-2}>14.7K<br />3.0days</Callout>
                <Callout $x={237} $y={128}>3.4K<br />2.3days</Callout>
                <Callout $x={232} $y={185}>3.0K<br />3.3days</Callout>
              </BarArea>
            </Col>
            <Col>
              <ColHead><PanelTitle $c="#333">Company Response</PanelTitle></ColHead>
              <SubHead $h={25} $pad={5}><SubText $off={-2} $fw={600}>Company res..</SubText><Sort off={7} /></SubHead>
              <BarArea>
                {[161, 225, 290].map(x => <GridLine key={x} $x={x} $t={-4} $h={280} />)}
                <RespRows>
                  {responses.map(([l, w]) => (
                    <React.Fragment key={l}>
                      <RespLabel>{l}</RespLabel>
                      <Bar $w={w} $c="#e597b2" $h={30} />
                    </React.Fragment>
                  ))}
                </RespRows>
              </BarArea>
            </Col>
            <Col>
              <CalHead>
                <CalTitle><PanelTitle $c="#333">Daily Complaints</PanelTitle></CalTitle>
                <CalSelectBox>
                  <Drop $w={91} $h={29}>
                    <DropText $fs={16} $off={3}>Septe...</DropText>
                    <DropArrow $w={25} />
                  </Drop>
                </CalSelectBox>
              </CalHead>
              <WeekRow>{weeks.map((d, i) => <WeekDay key={i}>{d}</WeekDay>)}</WeekRow>
              <CalGrid>
                <span /><span /><span /><span />
                {days.map(([n, bg, light]) => <Day key={n} $bg={bg} $light={light}>{n}</Day>)}
              </CalGrid>
            </Col>
          </BottomRow>
        </Main>

        <Side>
          <SideTop />
          <PanelBox>Filter Panel</PanelBox>
          <FilterGroup $x={8} $t={7}>
            <FilterLabel $dx={-2} $gap={4}>Year of Date rece..</FilterLabel>
            <Drop $w={153} $h={29}><DropText>(All)</DropText><DropArrow $w={26} /></Drop>
          </FilterGroup>
          <FilterGroup $x={10} $t={21}>
            <FilterLabel $dx={-3} $gap={3}>Company</FilterLabel>
            <Drop $w={145} $h={30}><DropText>(All)</DropText><DropArrow $w={26} /></Drop>
          </FilterGroup>
          <FilterGroup $x={9} $t={22}>
            <FilterLabel $dx={-3} $gap={3}>State</FilterLabel>
            <Drop $w={148} $h={30}><DropText>(Multiple val...</DropText><DropArrow $w={27} /></Drop>
          </FilterGroup>
          <PanelBox $mt={35}>Export Panel</PanelBox>
          <ExportRow>
            <svg width="86" height="50" viewBox="0 0 86 50">
              <path d="M8 0 H31 L48 17 V44 a5 5 0 01-5 5 H13 a5 5 0 01-5-5z" fill="#e62b2f" />
              <path d="M31 0 L48 17 H35 a4 4 0 01-4-4z" fill="#b71c20" />
              <rect x="0" y="21" width="37" height="16" rx="1" fill="#b71c20" />
              <text x="18.5" y="33.5" textAnchor="middle" fontFamily={SANS} fontWeight="700" fontSize="12.5" fill="#fff">PDF</text>
            </svg>
            <svg width="50" height="48" viewBox="0 0 50 48">
              <path d="M40 14 h5 a3 3 0 013 3 v24 a3 3 0 01-3 3 h-9z" fill="#c9eef5" stroke="#111" strokeWidth="1.6" />
              <path d="M9 1 H40 V41 H9z" fill="#f6f6f6" stroke="#111" strokeWidth="1.6" />
              <rect x="14" y="6" width="25" height="18" fill="#63d0e6" stroke="#111" strokeWidth="1.6" />
              <path d="M15 23 l8-8 l7 7 l3-3 l5 4z" fill="#8ed081" stroke="#111" strokeWidth="1" />
              <circle cx="31" cy="11" r="2" fill="#fff" />
              <rect x="1" y="27" width="34" height="17" rx="2.5" fill="#f9c85c" stroke="#111" strokeWidth="1.8" />
              <text x="18" y="41" textAnchor="middle" fontFamily={`"DejaVu Sans Mono", monospace`} fontWeight="700" fontSize="13.5" fill="#111">PNG</text>
            </svg>
          </ExportRow>
          <PptWrap>
            <svg width="40" height="42" viewBox="0 0 40 42">
              <rect x="3" y="0" width="33" height="42" fill="#fff" fillOpacity=".6" />
              <path d="M8 5h25M8 12h25M8 18h25" stroke="#cf4a2c" strokeWidth="1.4" />
              <rect x="1" y="21" width="39" height="16" fill="#cb4527" />
              <text x="20" y="33.5" textAnchor="middle" fontFamily={SANS} fontWeight="700" fontSize="11.5" fill="#fff">PPT</text>
            </svg>
          </PptWrap>
          <TopBox><span>Top 10</span><span>Complaining</span><span>Companies</span></TopBox>
          <BubbleSvg viewBox="1039 468 510 450">
            {bubbles.map(([x, y, r, c]) => <circle key={c} cx={x} cy={y} r={r} fill={c} />)}
          </BubbleSvg>
        </Side>
      </Page>
    </>
  );
}
